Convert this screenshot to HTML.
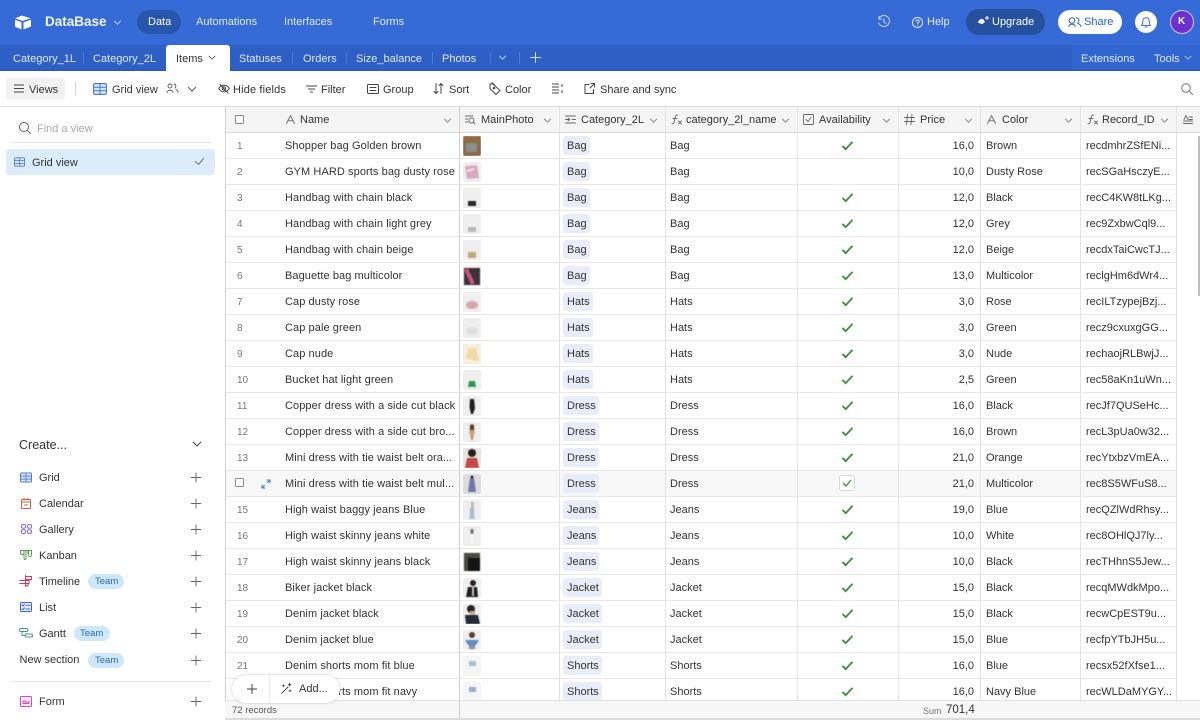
<!DOCTYPE html>
<html><head><meta charset="utf-8"><title>DataBase</title>
<style>
*{box-sizing:border-box}
html,body{margin:0;padding:0;width:1200px;height:720px;overflow:hidden;background:#fff}
body{font-family:"Liberation Sans",sans-serif;font-size:11px;color:#333;position:relative}
.t{position:absolute;white-space:nowrap;line-height:14px}
svg{position:absolute;overflow:visible}
.w{color:#fff}
.s{fill:none;stroke-linecap:round;stroke-linejoin:round}
#top{left:0;top:0;width:1200px;height:45px;background:#356ad7}
#tabs{left:0;top:45px;width:1200px;height:26px;background:#2d5fc4;border-bottom:1px solid #2a579f}
#ext{position:absolute;left:1072px;top:45px;width:128px;height:25px;background:#3166d0}
#act{position:absolute;left:166px;top:45px;width:64px;height:26px;background:#fff;border-radius:3px 3px 0 0}
.sep{position:absolute;width:1px;background:#4a78d0;top:52px;height:12px}
#grid{position:absolute;left:225px;top:106px;width:975px;height:614px;overflow:hidden}
.r{position:absolute;left:1px;width:951px;height:26px;border-bottom:1px solid #e8e8e8;background:#fff}
.r span{position:absolute;white-space:nowrap;line-height:27px;top:0;font-size:11px;color:#333}
.n{left:11px;color:#777!important;font-size:10px!important}
.m{left:59px;letter-spacing:.08px}
.th{left:237px;top:3px!important;width:18px;height:20px;border-radius:2px;background:#efefef;overflow:hidden}
.th svg{filter:blur(.4px)}
.p{left:337px;top:3px!important;height:19px;line-height:21px!important;padding:0 3px 0 4px;background:#e9edf9;border-radius:3px}
.c{left:444px}
.pr{left:673px;width:75px;text-align:right}
.co{left:760px}
.id{left:860px}
.r svg.k{left:615px;top:7px}
.v{position:absolute;top:1px;width:1px;height:594px;background:#e4e4e4}
.h{position:absolute;top:1px;height:26px;background:#f5f5f5;border-bottom:1px solid #dcdcdc}
</style></head><body>
<svg width="0" height="0" style="position:absolute"><defs>
<symbol id="ck" viewBox="0 0 14 12"><path d="M1.5 6.5L5 10L12.5 2" fill="none" stroke="#3f8f3f" stroke-width="2"/></symbol>
<symbol id="dn" viewBox="0 0 10 6"><path d="M1 1L5 5L9 1" fill="none" stroke="currentColor" stroke-width="1"/></symbol>
<symbol id="pl" viewBox="0 0 12 12"><path d="M6 .5V11.500M.5 6H11.500" fill="none" stroke="#666" stroke-width="1"/></symbol>
<symbol id="gr" viewBox="0 0 14 12"><rect x=".6" y=".6" width="12.800" height="10.800" rx="1.500" fill="#dbe6f8" stroke="#4a76c9" stroke-width="1.100"/><path d="M.6 4.300H13.400M.6 7.800H13.400M7 .6V11.400" stroke="#4a76c9" stroke-width="1"/></symbol>
</defs></svg>

<div id="top" style="position:absolute"></div>
<svg style="left:14px;top:15px" width="18" height="15" viewBox="0 0 18 15"><path d="M8 .6L1 3.200L8.500 6L16.500 3.200Z" fill="#fff"/><path d="M9.500 7.400V14.500L17 11.500V4.600Z" fill="#fff"/><path d="M1 4.800V11.800L7.500 14.500V7.300Z" fill="#fff"/></svg>
<span class="t w" style="left:45px;top:14px;font-size:13.500px;font-weight:700;opacity:.95;line-height:16px">DataBase</span>
<svg style="left:113px;top:20px;color:#d8e4fa" width="9" height="5"><use href="#dn"/></svg>
<div style="position:absolute;left:137px;top:10px;width:44px;height:24px;border-radius:12px;background:#2756ac"></div>
<span class="t w" style="left:148px;top:15px">Data</span>
<span class="t" style="left:196px;top:15px;color:#e3ebfb">Automations</span>
<span class="t" style="left:284px;top:15px;color:#e3ebfb">Interfaces</span>
<span class="t" style="left:373px;top:15px;color:#e3ebfb">Forms</span>
<svg style="left:878px;top:16px" class="s" width="12" height="12" stroke="#cfdcf6" stroke-width="1"><path d="M1 2.500A5.500 5.500 0 1 1 .8 7M1 .5V3H3.500M6 3V6L8 7.200"/></svg>
<svg style="left:912px;top:17px" class="s" width="11" height="11" stroke="#dfe8fa" stroke-width="1"><circle cx="5.500" cy="5.500" r="5"/><path d="M4 4.300C4 2.500 7.200 2.600 7.200 4.300C7.200 5.400 5.500 5.500 5.500 6.800M5.500 8.300V8.500"/></svg>
<span class="t" style="left:927px;top:15px;color:#e8effc">Help</span>
<div style="position:absolute;left:966px;top:9px;width:79px;height:26px;border-radius:13px;background:#26519f"></div>
<svg style="left:977px;top:15px" width="14" height="13" viewBox="0 0 14 13"><path d="M1 7.500C1.500 5 4 3.500 6 4L8 7L5.500 9L3 8.500Z" fill="#fff"/><path d="M10 1V5M8 3H12" stroke="#fff" stroke-width="1"/></svg>
<span class="t w" style="left:992px;top:15px">Upgrade</span>
<div style="position:absolute;left:1058px;top:10px;width:64px;height:24px;border-radius:12px;background:#fff"></div>
<svg style="left:1068px;top:17px" class="s" width="14" height="10" stroke="#2d62c7" stroke-width="1"><circle cx="4" cy="3.500" r="2.800"/><path d="M.8 9.500C1.500 6.500 6.500 6.500 7.200 9.500M8 1C11 0 12 4.500 9.500 6M10 6.500C11.500 7 12.500 8 13 9.500"/></svg>
<span class="t" style="left:1084px;top:15px;color:#2d62c7">Share</span>
<div style="position:absolute;left:1135px;top:11px;width:22px;height:22px;border-radius:50%;background:#fff"></div>
<svg style="left:1140px;top:16px" class="s" width="12" height="12" stroke="#3a6fd0" stroke-width="1"><path d="M1.500 9.500C3 8 2.500 6 3 4C3.500 1 8.500 1 9 4C9.500 6 9 8 10.500 9.500ZM5 11H7"/></svg>
<div style="position:absolute;left:1170px;top:10px;width:24px;height:24px;border-radius:50%;background:#6c2fd0;border:1.500px solid #d9c8f6"></div>
<span class="t w" style="left:1178px;top:15px;font-size:10px;font-weight:700">K</span>

<div id="tabs" style="position:absolute"></div>
<div id="ext"></div>
<div id="act"></div>
<span class="t" style="left:13px;top:52px;color:#dfe8fa">Category_1L</span>
<div class="sep" style="left:83px"></div>
<span class="t" style="left:93px;top:52px;color:#dfe8fa">Category_2L</span>
<span class="t" style="left:176px;top:52px;color:#333">Items</span>
<svg style="left:208px;top:55px;color:#444" width="8" height="5"><use href="#dn"/></svg>
<span class="t" style="left:239px;top:52px;color:#dfe8fa">Statuses</span>
<div class="sep" style="left:292px"></div>
<span class="t" style="left:303px;top:52px;color:#dfe8fa">Orders</span>
<div class="sep" style="left:346px"></div>
<span class="t" style="left:356px;top:52px;color:#dfe8fa">Size_balance</span>
<div class="sep" style="left:432px"></div>
<span class="t" style="left:442px;top:52px;color:#dfe8fa">Photos</span>
<div class="sep" style="left:490px"></div>
<svg style="left:498px;top:55px;color:#d8e4fa" width="9" height="5"><use href="#dn"/></svg>
<div class="sep" style="left:519px"></div>
<svg style="left:530px;top:52px" class="s" width="11" height="11" stroke="#d8e4fa" stroke-width="1"><path d="M5.500 .5V10.500M.5 5.500H10.500"/></svg>
<span class="t" style="left:1081px;top:52px;color:#dfe8fa">Extensions</span>
<span class="t" style="left:1154px;top:52px;color:#dfe8fa">Tools</span>
<svg style="left:1184px;top:55px;color:#d8e4fa" width="8" height="5"><use href="#dn"/></svg>

<div style="position:absolute;left:0;top:71px;width:1200px;height:36px;background:#fff;border-bottom:1px solid #e2e2e2"></div>
<div style="position:absolute;left:6px;top:78px;width:59px;height:21px;background:#f1f1f1;border-radius:3px"></div>
<svg style="left:14px;top:84px" width="10" height="9" stroke="#444"><path d="M0 1H10M0 4.500H10M0 8H10" stroke-width="1"/></svg>
<span class="t" style="left:29px;top:83px">Views</span>
<div style="position:absolute;left:75px;top:82px;width:1px;height:13px;background:#d8d8d8"></div>
<svg style="left:93px;top:83px" width="14" height="12"><use href="#gr"/></svg>
<span class="t" style="left:112px;top:83px">Grid view</span>
<svg style="left:166px;top:83px" class="s" width="13" height="11" stroke="#555" stroke-width=".9"><circle cx="4" cy="3" r="2"/><path d="M1 9.500C1 6.500 7 6.500 7 9.500M8 1C10 1 10.500 4 9 5M10 6.500C11.500 7 12 8 12 9.500"/></svg>
<svg style="left:187px;top:86px;color:#555" width="10" height="6"><use href="#dn"/></svg>
<svg style="left:218px;top:83px" class="s" width="12" height="11" stroke="#444" stroke-width="1"><path d="M.7 5.500C3.500 1 8.500 1 11.300 5.500C8.500 10 3.500 10 .7 5.500ZM2 1.500L10 10"/><circle cx="6" cy="5.500" r="1.700"/></svg>
<span class="t" style="left:233px;top:83px;letter-spacing:.15px">Hide fields</span>
<svg style="left:306px;top:85px" width="11" height="8" stroke="#444"><path d="M0 1H11M2 4H9M4 7H7" stroke-width="1"/></svg>
<span class="t" style="left:321px;top:83px">Filter</span>
<svg style="left:367px;top:84px" class="s" width="12" height="10" stroke="#444" stroke-width="1"><rect x=".5" y=".5" width="11" height="9" rx="1"/><path d="M3 3.500H9M3 6.500H9"/></svg>
<span class="t" style="left:383px;top:83px">Group</span>
<svg style="left:433px;top:83px" class="s" width="11" height="11" stroke="#444" stroke-width="1"><path d="M3 .5V10.500M1 8.500L3 10.500L5 8.500M8 10.500V.5M6 2.500L8 .5L10 2.500"/></svg>
<span class="t" style="left:449px;top:83px">Sort</span>
<svg style="left:489px;top:82px" class="s" width="12" height="13" stroke="#444" stroke-width="1"><path d="M4 2L11 8.500L7 12.500L1 6.500V2ZM3 .5L6 3.500"/><circle cx="5" cy="6" r=".8"/></svg>
<span class="t" style="left:505px;top:83px">Color</span>
<svg style="left:552px;top:83px" width="12" height="11" stroke="#444"><path d="M0 1H7M0 4H7M0 7H7M0 10H7M10 1V4M10 7V10" stroke-width="1"/></svg>
<svg style="left:584px;top:83px" class="s" width="11" height="11" stroke="#444" stroke-width="1"><path d="M5 1.500H1V10.500H9.500V6.500M7 .5H10.500V4M10.500 .5L6 5"/></svg>
<span class="t" style="left:600px;top:83px">Share and sync</span>
<svg style="left:1181px;top:83px" class="s" width="12" height="12" stroke="#777" stroke-width="1"><circle cx="5" cy="5" r="4.300"/><path d="M8.200 8.200L11.500 11.500"/></svg>

<svg style="left:19px;top:122px" class="s" width="12" height="12" stroke="#666" stroke-width="1"><circle cx="5" cy="5" r="4.500"/><path d="M8.300 8.300L11.500 11.500"/></svg>
<span class="t" style="left:37px;top:122px;color:#aaa">Find a view</span>
<div style="position:absolute;left:10px;top:142px;width:202px;height:1px;background:#e6e6e6"></div>
<div style="position:absolute;left:6px;top:149px;width:209px;height:26px;background:#dcecfb;border-radius:3px"></div>
<svg style="left:14px;top:157px" width="11" height="10" viewBox="0 0 14 12"><use href="#gr"/></svg>
<span class="t" style="left:32px;top:156px">Grid view</span>
<svg style="left:195px;top:158px" class="s" width="9" height="7" stroke="#777" stroke-width="1"><path d="M.5 3.500L3.500 6.500L8.500 .5"/></svg>

<span class="t" style="left:19px;top:438px;font-size:12.500px;color:#333">Create...</span>
<svg style="left:192px;top:441px;color:#444" width="10" height="6"><use href="#dn"/></svg>

<svg style="left:20px;top:472px" width="12" height="11" viewBox="0 0 14 12"><use href="#gr"/></svg>
<span class="t" style="left:39px;top:471px">Grid</span>
<svg style="left:190px;top:472px" width="12" height="11"><use href="#pl"/></svg>
<svg style="left:21px;top:498px" class="s" width="10" height="11" stroke="#c4623f" stroke-width="1"><rect x=".5" y="1.500" width="9" height="9" rx="1"/><path d="M.5 4H9.500M3 .3V2M7 .3V2M3.500 7H6.500"/></svg>
<span class="t" style="left:39px;top:497px">Calendar</span>
<svg style="left:190px;top:498px" width="12" height="11"><use href="#pl"/></svg>
<svg style="left:21px;top:524px" class="s" width="11" height="10" stroke="#8a66db" stroke-width="1"><rect x=".5" y=".5" width="4" height="3.800" rx="1.500"/><rect x="6.500" y=".5" width="4" height="3.800" rx="1.500"/><rect x=".5" y="5.700" width="4" height="3.800" rx="1.500"/><rect x="6.500" y="5.700" width="4" height="3.800" rx="1.500"/></svg>
<span class="t" style="left:39px;top:523px">Gallery</span>
<svg style="left:190px;top:524px" width="12" height="11"><use href="#pl"/></svg>
<svg style="left:20px;top:550px" class="s" width="12" height="10" stroke="#5a9d50" stroke-width="1"><path d="M.5 .5H11.500V4C11.500 7 9 8 8.500 4V.5M8 .5V4M4 .5V8C4 10 6 10 6 8V.5M.5 .5V3C.5 5 4 5 4 3"/></svg>
<span class="t" style="left:39px;top:549px">Kanban</span>
<svg style="left:190px;top:550px" width="12" height="11"><use href="#pl"/></svg>
<svg style="left:19px;top:575px" class="s" width="14" height="12" stroke="#c53a64" stroke-width="1"><path d="M6.500 .5V11.500M6.500 1.500H12.500V4.500H6.500M.8 5.500H10V8.500H.8M6.500 8.500H9V11H6.500"/></svg>
<span class="t" style="left:39px;top:575px">Timeline</span>
<div style="position:absolute;left:88px;top:574px;width:36px;height:15px;border-radius:8px;background:#cfe7fa"></div>
<span class="t" style="left:95px;top:575px;font-size:9.500px;color:#2c6bb5">Team</span>
<svg style="left:190px;top:576px" width="12" height="11"><use href="#pl"/></svg>
<svg style="left:20px;top:602px" class="s" width="12" height="11" stroke="#3f66c0" stroke-width="1"><rect x=".5" y=".5" width="11" height="9" rx="1" fill="#e8eefa"/><path d="M2 3L3 4L4.500 2.200M2 6.800L3 7.800L4.500 6M6 3.200H10M6 7H10"/></svg>
<span class="t" style="left:39px;top:601px">List</span>
<svg style="left:190px;top:602px" width="12" height="11"><use href="#pl"/></svg>
<svg style="left:19px;top:628px" class="s" width="14" height="10" stroke="#4f9082" stroke-width="1"><rect x=".5" y=".5" width="8.500" height="3" rx="1.500"/><rect x="6" y="6" width="7.500" height="3" rx="1.500"/><path d="M3 3.500V7.500H6"/></svg>
<span class="t" style="left:39px;top:627px">Gantt</span>
<div style="position:absolute;left:74px;top:626px;width:36px;height:15px;border-radius:8px;background:#cfe7fa"></div>
<span class="t" style="left:80px;top:627px;font-size:9.500px;color:#2c6bb5">Team</span>
<svg style="left:190px;top:628px" width="12" height="11"><use href="#pl"/></svg>
<span class="t" style="left:19.500px;top:653px">New section</span>
<div style="position:absolute;left:88px;top:653px;width:36px;height:15px;border-radius:8px;background:#cfe7fa"></div>
<span class="t" style="left:95px;top:654px;font-size:9.500px;color:#2c6bb5">Team</span>
<svg style="left:190px;top:655px" width="12" height="11"><use href="#pl"/></svg>
<div style="position:absolute;left:10px;top:681px;width:202px;height:1px;background:#e6e6e6"></div>
<svg style="left:20px;top:696px" class="s" width="12" height="11" stroke="#cc4fa6" stroke-width="1"><rect x=".5" y=".5" width="11" height="10" rx="1" fill="#fbe6f4"/><path d="M3 5V7.500H9V6H5.500L5 5Z"/></svg>
<span class="t" style="left:39px;top:695px">Form</span>
<svg style="left:190px;top:696px" width="12" height="11"><use href="#pl"/></svg>

<div id="grid">
<div style="position:absolute;left:0;top:0;width:1px;height:614px;background:#cfcfcf"></div>
<div style="position:absolute;left:0;top:0;width:975px;height:1px;background:#dcdcdc"></div>

<div class="r" style="top:27px"><span class="n">1</span><span class="m">Shopper bag Golden brown</span><span class="th"><svg width="18" height="20"><rect width="18" height="20" fill="#8c6a48"/><rect x="3" y="7" width="11" height="9" fill="#8b8d8f"/><path d="M4 6L5 1M13 6L12 1" stroke="#a66d2c" stroke-width="2"/></svg></span><span class="p">Bag</span><span class="c">Bag</span><svg class="k" width="13" height="11"><use href="#ck"/></svg><span class="pr">16,0</span><span class="co">Brown</span><span class="id">recdmhrZSfENi...</span></div>
<div class="r" style="top:53px"><span class="n">2</span><span class="m">GYM HARD sports bag dusty rose</span><span class="th"><svg width="18" height="20"><path d="M2 4L14 3L16 16L4 17Z" fill="#d9a9c0"/><path d="M4 9L11 7" stroke="#f4e2ea" stroke-width="2"/></svg></span><span class="p">Bag</span><span class="c">Bag</span><span class="pr">10,0</span><span class="co">Dusty Rose</span><span class="id">recSGaHsczyE...</span></div>
<div class="r" style="top:79px"><span class="n">3</span><span class="m">Handbag with chain black</span><span class="th"><svg width="18" height="20"><rect x="5" y="13" width="8" height="5" fill="#2a2a2a"/></svg></span><span class="p">Bag</span><span class="c">Bag</span><svg class="k" width="13" height="11"><use href="#ck"/></svg><span class="pr">12,0</span><span class="co">Black</span><span class="id">recC4KW8tLKg...</span></div>
<div class="r" style="top:105px"><span class="n">4</span><span class="m">Handbag with chain light grey</span><span class="th"><svg width="18" height="20"><rect x="5" y="13" width="8" height="5" fill="#b9b9b9"/></svg></span><span class="p">Bag</span><span class="c">Bag</span><svg class="k" width="13" height="11"><use href="#ck"/></svg><span class="pr">12,0</span><span class="co">Grey</span><span class="id">rec9ZxbwCql9...</span></div>
<div class="r" style="top:131px"><span class="n">5</span><span class="m">Handbag with chain beige</span><span class="th"><svg width="18" height="20"><rect x="5" y="12" width="8" height="6" fill="#c2a77a"/></svg></span><span class="p">Bag</span><span class="c">Bag</span><svg class="k" width="13" height="11"><use href="#ck"/></svg><span class="pr">12,0</span><span class="co">Beige</span><span class="id">recdxTaiCwcTJ...</span></div>
<div class="r" style="top:157px"><span class="n">6</span><span class="m">Baguette bag multicolor</span><span class="th"><svg width="18" height="20"><rect x="1" y="2" width="16" height="17" fill="#3c3236"/><path d="M3 3L10 18" stroke="#c9507f" stroke-width="4"/></svg></span><span class="p">Bag</span><span class="c">Bag</span><svg class="k" width="13" height="11"><use href="#ck"/></svg><span class="pr">13,0</span><span class="co">Multicolor</span><span class="id">reclgHm6dWr4...</span></div>
<div class="r" style="top:183px"><span class="n">7</span><span class="m">Cap dusty rose</span><span class="th"><svg width="18" height="20"><ellipse cx="9" cy="13" rx="6" ry="4" fill="#d9a8ac"/></svg></span><span class="p">Hats</span><span class="c">Hats</span><svg class="k" width="13" height="11"><use href="#ck"/></svg><span class="pr">3,0</span><span class="co">Rose</span><span class="id">recILTzypejBzj...</span></div>
<div class="r" style="top:209px"><span class="n">8</span><span class="m">Cap pale green</span><span class="th"><svg width="18" height="20"><ellipse cx="9" cy="13" rx="6" ry="4" fill="#dfe3e0"/></svg></span><span class="p">Hats</span><span class="c">Hats</span><svg class="k" width="13" height="11"><use href="#ck"/></svg><span class="pr">3,0</span><span class="co">Green</span><span class="id">recz9cxuxgGG...</span></div>
<div class="r" style="top:235px"><span class="n">9</span><span class="m">Cap nude</span><span class="th"><svg width="18" height="20"><rect width="18" height="20" fill="#f6efdf"/><path d="M3 15L5 4H13L16 17Z" fill="#f0dca9"/></svg></span><span class="p">Hats</span><span class="c">Hats</span><svg class="k" width="13" height="11"><use href="#ck"/></svg><span class="pr">3,0</span><span class="co">Nude</span><span class="id">rechaojRLBwjJ...</span></div>
<div class="r" style="top:261px"><span class="n">10</span><span class="m">Bucket hat light green</span><span class="th"><svg width="18" height="20"><path d="M5 17L6 11H12L13 17Z" fill="#2f9a4c"/></svg></span><span class="p">Hats</span><span class="c">Hats</span><svg class="k" width="13" height="11"><use href="#ck"/></svg><span class="pr">2,5</span><span class="co">Green</span><span class="id">rec58aKn1uWn...</span></div>
<div class="r" style="top:287px"><span class="n">11</span><span class="m">Copper dress with a side cut black</span><span class="th"><svg width="18" height="20"><path d="M7 3H11L12 12L10 18H8L6.500 11Z" fill="#1e1e1e"/></svg></span><span class="p">Dress</span><span class="c">Dress</span><svg class="k" width="13" height="11"><use href="#ck"/></svg><span class="pr">16,0</span><span class="co">Black</span><span class="id">recJf7QUSeHc...</span></div>
<div class="r" style="top:313px"><span class="n">12</span><span class="m">Copper dress with a side cut bro...</span><span class="th"><svg width="18" height="20"><path d="M7 2H11L11.500 11L10 18H8L6.500 11Z" fill="#c9a27a"/><rect x="7" y="3" width="4" height="5" fill="#5a3d2a"/></svg></span><span class="p">Dress</span><span class="c">Dress</span><svg class="k" width="13" height="11"><use href="#ck"/></svg><span class="pr">16,0</span><span class="co">Brown</span><span class="id">recL3pUa0w32...</span></div>
<div class="r" style="top:339px"><span class="n">13</span><span class="m">Mini dress with tie waist belt ora...</span><span class="th"><svg width="18" height="20"><rect width="18" height="20" fill="#e9e2dd"/><circle cx="9" cy="5" r="4" fill="#2b1f1c"/><path d="M4 10H14L16 20H2Z" fill="#c44a4a"/></svg></span><span class="p">Dress</span><span class="c">Dress</span><svg class="k" width="13" height="11"><use href="#ck"/></svg><span class="pr">21,0</span><span class="co">Orange</span><span class="id">recYtxbzVmEA...</span></div>
<div class="r" style="top:365px;background:#f8f8f8"><svg style="left:9px;top:7px" width="9" height="9"><rect x=".5" y=".5" width="8" height="8" rx="1" fill="#fff" stroke="#8a8a8a"/></svg><svg style="left:35px;top:8px" class="s" width="10" height="10" stroke="#3b76d8" stroke-width="1"><path d="M1 9L3.500 6.500M1 6V9H4M9 1L6.500 3.500M6 1H9V4"/></svg><span class="m">Mini dress with tie waist belt mul...</span><span class="th"><svg width="18" height="20"><rect width="18" height="20" fill="#dcdcdc"/><path d="M7 4H11L13 18H5Z" fill="#7378ad"/><circle cx="9" cy="3" r="1.500" fill="#3a3030"/></svg></span><span class="p" style="background:#e9edf9">Dress</span><span class="c">Dress</span><svg style="left:613px;top:4px" width="16" height="16"><rect x=".5" y=".5" width="15" height="15" rx="2" fill="#fff" stroke="#d8d8d8"/><path d="M4 8L7 11L12 5" fill="none" stroke="#3f8f3f" stroke-width="1.300"/></svg><span class="pr">21,0</span><span class="co">Multicolor</span><span class="id">rec8S5WFuS8...</span></div>
<div class="r" style="top:391px"><span class="n">15</span><span class="m">High waist baggy jeans Blue</span><span class="th"><svg width="18" height="20"><rect x="8" y="2" width="3" height="6" fill="#c8b8a8"/><path d="M7 8H11L11.500 19H6.500Z" fill="#a8c0d6"/></svg></span><span class="p">Jeans</span><span class="c">Jeans</span><svg class="k" width="13" height="11"><use href="#ck"/></svg><span class="pr">19,0</span><span class="co">Blue</span><span class="id">recQZlWdRhsy...</span></div>
<div class="r" style="top:417px"><span class="n">16</span><span class="m">High waist skinny jeans white</span><span class="th"><svg width="18" height="20"><rect x="7.500" y="3" width="3" height="5" fill="#7a7a7a"/><path d="M7 8H11L10.500 18H7.500Z" fill="#f7f7f7"/></svg></span><span class="p">Jeans</span><span class="c">Jeans</span><svg class="k" width="13" height="11"><use href="#ck"/></svg><span class="pr">10,0</span><span class="co">White</span><span class="id">rec8OHlQJ7ly...</span></div>
<div class="r" style="top:443px"><span class="n">17</span><span class="m">High waist skinny jeans black</span><span class="th"><svg width="18" height="20"><rect x="1" y="1" width="16" height="18" fill="#4a4a40"/><path d="M5 6H17V19H5Z" fill="#151515"/></svg></span><span class="p">Jeans</span><span class="c">Jeans</span><svg class="k" width="13" height="11"><use href="#ck"/></svg><span class="pr">10,0</span><span class="co">Black</span><span class="id">recTHhnS5Jew...</span></div>
<div class="r" style="top:469px"><span class="n">18</span><span class="m">Biker jacket black</span><span class="th"><svg width="18" height="20"><circle cx="10" cy="5" r="3" fill="#2a2020"/><path d="M5 9H14L15 19H3Z" fill="#1d1d1d"/><rect x="9" y="8" width="2" height="10" fill="#c9c0b8"/></svg></span><span class="p">Jacket</span><span class="c">Jacket</span><svg class="k" width="13" height="11"><use href="#ck"/></svg><span class="pr">15,0</span><span class="co">Black</span><span class="id">recqMWdkMpo...</span></div>
<div class="r" style="top:495px"><span class="n">19</span><span class="m">Denim jacket black</span><span class="th"><svg width="18" height="20"><circle cx="8" cy="5" r="4" fill="#2a2420"/><rect x="7" y="7" width="5" height="4" fill="#d3a98d"/><path d="M2 11H15L17 20H3Z" fill="#232a3a"/></svg></span><span class="p">Jacket</span><span class="c">Jacket</span><svg class="k" width="13" height="11"><use href="#ck"/></svg><span class="pr">15,0</span><span class="co">Black</span><span class="id">recwCpEST9u...</span></div>
<div class="r" style="top:521px"><span class="n">20</span><span class="m">Denim jacket blue</span><span class="th"><svg width="18" height="20"><circle cx="9" cy="5" r="3" fill="#5a4030"/><path d="M2 10H16L13 15H5Z" fill="#5f8fc2"/><rect x="6" y="15" width="6" height="4" fill="#8a8f99"/></svg></span><span class="p">Jacket</span><span class="c">Jacket</span><svg class="k" width="13" height="11"><use href="#ck"/></svg><span class="pr">15,0</span><span class="co">Blue</span><span class="id">recfpYTbJH5u...</span></div>
<div class="r" style="top:547px"><span class="n">21</span><span class="m">Denim shorts mom fit blue</span><span class="th"><svg width="18" height="20"><rect width="18" height="20" fill="#f6f6f6"/><rect x="6" y="5" width="7" height="5" fill="#a6c0d8"/></svg></span><span class="p">Shorts</span><span class="c">Shorts</span><svg class="k" width="13" height="11"><use href="#ck"/></svg><span class="pr">16,0</span><span class="co">Blue</span><span class="id">recsx52fXfse1...</span></div>
<div class="r" style="top:573px"><span class="n">22</span><span class="m">Denim shorts mom fit navy</span><span class="th"><svg width="18" height="20"><rect width="18" height="20" fill="#f6f6f6"/><rect x="6" y="5" width="7" height="5" fill="#93b0cc"/></svg></span><span class="p">Shorts</span><span class="c">Shorts</span><svg class="k" width="13" height="11"><use href="#ck"/></svg><span class="pr">16,0</span><span class="co">Navy Blue</span><span class="id">recWLDaMYGY...</span></div>

<div class="h" style="left:1px;width:951px"></div>
<div class="h" style="left:952px;width:23px;background:#f5f5f5"></div>
<svg style="left:10px;top:9px" width="9" height="9"><rect x=".5" y=".5" width="8" height="8" rx="1" fill="#fff" stroke="#8a8a8a"/></svg>
<svg style="left:61px;top:9px" class="s" width="9" height="9" stroke="#777" stroke-width="1"><path d="M.5 8.500L4.500 .5L8.500 8.500M2 5.800H7"/></svg>
<span class="t" style="left:75px;top:7px">Name</span>
<svg style="left:218px;top:12px;color:#777" width="9" height="5"><use href="#dn"/></svg>
<svg style="left:240px;top:9px" class="s" width="11" height="10" stroke="#666" stroke-width=".9"><path d="M.5 1H8M.5 4H3M.5 7H3"/><circle cx="6.500" cy="5.500" r="2.500"/><path d="M8.500 7.500L10 9"/></svg>
<span class="t" style="left:256px;top:7px">MainPhoto</span>
<svg style="left:318px;top:12px;color:#777" width="9" height="5"><use href="#dn"/></svg>
<svg style="left:340px;top:9px" class="s" width="11" height="9" stroke="#666" stroke-width=".9"><path d="M.5 1H10.500M.5 4.500H4M7 4.500H10.500M.5 8H10.500M3 3L4.800 4.500L3 6"/></svg>
<span class="t" style="left:356px;top:7px">Category_2L</span>
<svg style="left:424px;top:12px;color:#777" width="9" height="5"><use href="#dn"/></svg>
<svg style="left:446px;top:8px" class="s" width="12" height="11" stroke="#666" stroke-width=".9"><path d="M7 1C5 .5 4.500 2 4 4L3 8.500C2.500 10 1.500 10 1 9.500M2 4.500H6M7.500 7L10.500 10M10.500 7L7.500 10"/></svg>
<span class="t" style="left:461px;top:7px">category_2l_name</span>
<svg style="left:556px;top:12px;color:#777" width="9" height="5"><use href="#dn"/></svg>
<svg style="left:578px;top:8px" class="s" width="11" height="11" stroke="#666" stroke-width=".9"><rect x=".5" y=".5" width="10" height="10" rx="1"/><path d="M3 5.500L5 7.500L8 3.500"/></svg>
<span class="t" style="left:594px;top:7px">Availability</span>
<svg style="left:657px;top:12px;color:#777" width="9" height="5"><use href="#dn"/></svg>
<svg style="left:679px;top:8px" class="s" width="11" height="11" stroke="#666" stroke-width=".9"><path d="M3.500 .5L2.500 10.500M8 .5L7 10.500M.5 3.500H10.500M.5 7.500H10.500"/></svg>
<span class="t" style="left:695px;top:7px">Price</span>
<svg style="left:739px;top:12px;color:#777" width="9" height="5"><use href="#dn"/></svg>
<svg style="left:762px;top:9px" class="s" width="9" height="9" stroke="#777" stroke-width="1"><path d="M.5 8.500L4.500 .5L8.500 8.500M2 5.800H7"/></svg>
<span class="t" style="left:777px;top:7px">Color</span>
<svg style="left:839px;top:12px;color:#777" width="9" height="5"><use href="#dn"/></svg>
<svg style="left:862px;top:8px" class="s" width="12" height="11" stroke="#666" stroke-width=".9"><path d="M7 1C5 .5 4.500 2 4 4L3 8.500C2.500 10 1.500 10 1 9.500M2 4.500H6M7.500 7L10.500 10M10.500 7L7.500 10"/></svg>
<span class="t" style="left:877px;top:7px">Record_ID</span>
<svg style="left:935px;top:12px;color:#777" width="9" height="5"><use href="#dn"/></svg>
<svg style="left:958px;top:9px" class="s" width="10" height="9" stroke="#666" stroke-width=".9"><path d="M3 .5L1 4.500M3 .5L5 4.500M.5 6H9.500M.5 8.500H9.500M6 2H9.500M6 4.500H9.500"/></svg>

<div class="v" style="left:234px;background:#cfcfcf"></div>
<div class="v" style="left:334px"></div>
<div class="v" style="left:440px"></div>
<div class="v" style="left:572px"></div>
<div class="v" style="left:673px"></div>
<div class="v" style="left:755px"></div>
<div class="v" style="left:855px"></div>
<div class="v" style="left:951px"></div>

<div style="position:absolute;left:973px;top:30px;width:2px;height:160px;background:#bdbdbd;border-radius:2px"></div>

<div style="position:absolute;left:0;top:594px;width:975px;height:20px;background:#f7f7f7;border-top:1px solid #e2e2e2"></div>
<div style="position:absolute;left:234px;top:594px;width:1px;height:20px;background:#cfcfcf"></div>
<div style="position:absolute;left:0;top:612px;width:975px;height:2px;background:#dcdcdc"></div>
<span class="t" style="left:7px;top:598px;font-size:9.500px;color:#555">72 records</span>
<span class="t" style="left:698px;top:598px;font-size:9px;color:#777">Sum</span>
<span class="t" style="left:721px;top:597px;font-size:11.500px;color:#333">701,4</span>

<div style="position:absolute;left:7px;top:569px;width:108px;height:28px;border-radius:14px;background:#fff;box-shadow:0 0 2px rgba(0,0,0,.25)"></div>
<div style="position:absolute;left:44px;top:569px;width:1px;height:28px;background:#ececec"></div>
<svg style="left:22px;top:578px" width="10" height="10" stroke="#444"><path d="M5 0V10M0 5H10" stroke-width="1"/></svg>
<svg style="left:56px;top:577px" class="s" width="11" height="11" stroke="#444" stroke-width="1"><path d="M.8 10.200L7 4M8.500 .5V3M7.300 1.800H9.800M2.500 2V3.500M1.800 2.800H3.300M9 7V8.500M8.300 7.800H9.800"/></svg>
<span class="t" style="left:74px;top:576px">Add...</span>
</div>
</body></html>
